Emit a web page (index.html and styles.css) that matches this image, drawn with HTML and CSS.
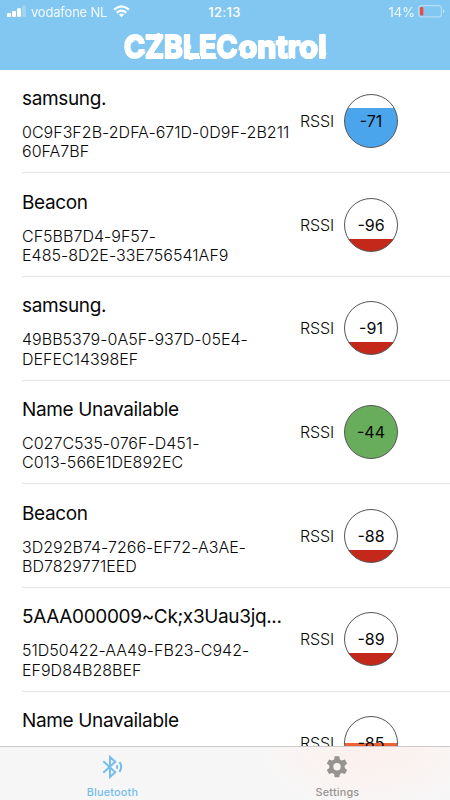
FILE: index.html
```html
<!DOCTYPE html>
<html lang="en">
<head>
<meta charset="utf-8">
<meta name="viewport" content="width=device-width, initial-scale=1">
<title>CZBLEControl</title>
<link rel="stylesheet" href="styles.css">
</head>
<body>
<div class="app">
  <header class="header">
    <div class="status">
      <div class="carrier">
        <svg class="signal" width="19" height="13" viewBox="0 0 19 13" fill="#fff"><rect x="0" y="8" width="4" height="4" rx="1"/><rect x="5" y="6" width="4" height="6" rx="1"/><rect x="10" y="3.200" width="4" height="8.800" rx="1"/><rect x="15" y="0.500" width="4" height="11.500" rx="1" opacity=".25"/></svg>
        <span class="carrier-name">vodafone NL</span>
        <svg width="17" height="13" viewBox="0 0 17 13" fill="none" stroke="#fff" stroke-width="2.200"><path d="M1 4.700Q8.500-1.900 16 4.700"/><path d="M3.700 7.800Q8.500 3.600 13.300 7.800"/><path d="M5.900 9.500Q8.500 7.600 11.100 9.500L8.500 12.200Z" fill="#fff" stroke="none"/></svg>
      </div>
      <span class="time">12:13</span>
      <div class="power">
        <span>14%</span>
        <svg width="27" height="13" viewBox="0 0 27 13"><rect x=".6" y=".6" width="22.800" height="11.200" rx="2.800" fill="none" stroke="#fff" stroke-opacity=".42" stroke-width="1.200"/><rect x="2" y="2" width="3.300" height="8.400" rx="1" fill="#eb4d3d"/><path d="M25 4.300Q26.300 5 26.300 6.200T25 8.200Z" fill="#fff" opacity=".5"/></svg>
      </div>
    </div>
    <svg class="logo" width="208" height="44" viewBox="0 0 208 44">
      <filter id="rough" x="-5%" y="-10%" width="110%" height="120%">
        <feTurbulence type="fractalNoise" baseFrequency=".12" numOctaves="1" seed="4"/>
        <feDisplacementMap in="SourceGraphic" scale="2.500" xChannelSelector="R" yChannelSelector="G"/>
      </filter>
      <g filter="url(#rough)">
        <text class="caps" x="3" y="33.500" textLength="113.500" lengthAdjust="spacingAndGlyphs">CZBLEC</text>
        <text class="lower" x="117.500" y="33.500" textLength="88" lengthAdjust="spacingAndGlyphs">ontrol</text>
      </g>
    </svg>
  </header>
  <main class="list">
    <section class="row"><div class="info"><h2>samsung.</h2><p>0C9F3F2B-2DFA-671D-0D9F-2B211<br>60FA7BF</p></div><span class="rssi">RSSI</span><div class="gauge blue">-71</div></section>
    <section class="row"><div class="info"><h2>Beacon</h2><p>CF5BB7D4-9F57-<br>E485-8D2E-33E756541AF9</p></div><span class="rssi">RSSI</span><div class="gauge red">-96</div></section>
    <section class="row"><div class="info"><h2>samsung.</h2><p>49BB5379-0A5F-937D-05E4-<br>DEFEC14398EF</p></div><span class="rssi">RSSI</span><div class="gauge red">-91</div></section>
    <section class="row"><div class="info"><h2>Name Unavailable</h2><p>C027C535-076F-D451-<br>C013-566E1DE892EC</p></div><span class="rssi">RSSI</span><div class="gauge green">-44</div></section>
    <section class="row"><div class="info"><h2>Beacon</h2><p>3D292B74-7266-EF72-A3AE-<br>BD7829771EED</p></div><span class="rssi">RSSI</span><div class="gauge red">-88</div></section>
    <section class="row"><div class="info"><h2>5AAA000009~Ck;x3Uau3jq...</h2><p>51D50422-AA49-FB23-C942-<br>EF9D84B28BEF</p></div><span class="rssi">RSSI</span><div class="gauge red">-89</div></section>
    <section class="row"><div class="info"><h2>Name Unavailable</h2></div><span class="rssi">RSSI</span><div class="gauge orange">-85</div></section>
  </main>
  <nav class="tabs">
    <div class="tab active">
      <svg width="24" height="24" viewBox="0 0 24 24" fill="none" stroke="currentColor" stroke-width="2"><path d="M3.300 6.200L15.200 17.200L10 22V2L15.200 6.800L3.300 17.800"/><path d="M16.700 10.200Q17.700 12 16.700 13.800M19.500 7Q22.800 12 19.500 17"/></svg>
      <span>Bluetooth</span>
    </div>
    <div class="tab">
      <svg width="24" height="24" viewBox="0 0 24 24" fill="currentColor"><path fill-rule="evenodd" d="M9.700 1.300h4.600l.6 3.200 1.900 1.100 3.100-1.100 2.300 4-2.500 2.100v2.300l2.500 2.100-2.300 4-3.100-1.100-1.900 1.100-.6 3.200H9.700L9.100 19l-1.900-1.100L4.100 19l-2.300-4 2.500-2.100v-2.300L1.800 8.500l2.300-4 3.100 1.100 1.900-1.100ZM12 8.100a3.700 3.700 0 1 0 0 7.400 3.700 3.700 0 0 0 0-7.400Z"/></svg>
      <span>Settings</span>
    </div>
  </nav>
</div>
</body>
</html>
```
FILE: styles.css
```css
* { box-sizing: border-box; }
body { margin: 0; background: #fff; color: #080808; font-family: Inter, "Liberation Sans", sans-serif; }
.app { width: 450px; height: 800px; display: flex; flex-direction: column; overflow: hidden; }
.header { flex: 0 0 69.5px; background: #81c7f2; color: #fff; }
.status { display: grid; grid-template-columns: 1fr auto 1fr; height: 24px; align-items: center; padding: 0 8px 0 7px; font-size: 13px; }
.carrier { display: flex; align-items: center; gap: 5px; }
.carrier-name { letter-spacing: -.2px; margin-right: 1px; opacity: .9; }
.time { font-weight: 500; letter-spacing: .3px; }
.power { display: flex; align-items: center; justify-content: flex-end; gap: 3px; margin-right: -3px; }
.power span { opacity: .9; }
.status svg { margin-top: -2px; }
.logo { display: block; margin: 0 0 0 121px; fill: #fff; stroke: #fff; stroke-width: 2.2px; stroke-linejoin: round; font-family: Inter, sans-serif; font-weight: 700; }
.caps { font-size: 31.500px; }
.lower { font-size: 31px; }
.list { flex: 1; min-height: 0; overflow: hidden; }
.row { height: 103.7px; margin-left: 22px; padding-right: 52px; display: flex; align-items: center; border-bottom: 1px solid #e5e5e5; }
.info { width: 278px; align-self: flex-start; padding-top: 16.4px; white-space: nowrap; }
h2 { margin: 0; font-size: 19px; font-weight: 400; line-height: 26px; letter-spacing: -.35px; }
p { margin: 11px 0 0; font-size: 16px; font-weight: 300; line-height: 19.3px; letter-spacing: .02px; }
.rssi { width: 44px; font-size: 16px; font-weight: 300; letter-spacing: -.1px; }
.gauge { width: 54px; height: 54px; flex: none; border: 1px solid #555; border-radius: 50%; display: flex; align-items: center; justify-content: center; font-size: 16px; }
.blue { background: linear-gradient(#fff 13px, #4ba5ed 13px); }
.red { background: linear-gradient(#fff 40px, #c4281b 40px); }
.green { background: #68ad5b; }
.orange { background: linear-gradient(#fff 26px, #ed6237 26px); }
.tabs { flex: 0 0 54px; display: flex; border-top: 1px solid #cbcbcb; background: radial-gradient(ellipse 110px 60px at 371px 0, #fdf0ec, #f7f6f6); color: #969391; }
.tab { flex: 1; display: flex; flex-direction: column; align-items: center; padding-top: 8px; font-size: 10.8px; font-weight: 500; letter-spacing: .22px; }
.tab span { line-height: 14px; margin-top: 6.5px; }
.tab svg { margin-left: -1px; }
.active { color: #74bdec; }
```
